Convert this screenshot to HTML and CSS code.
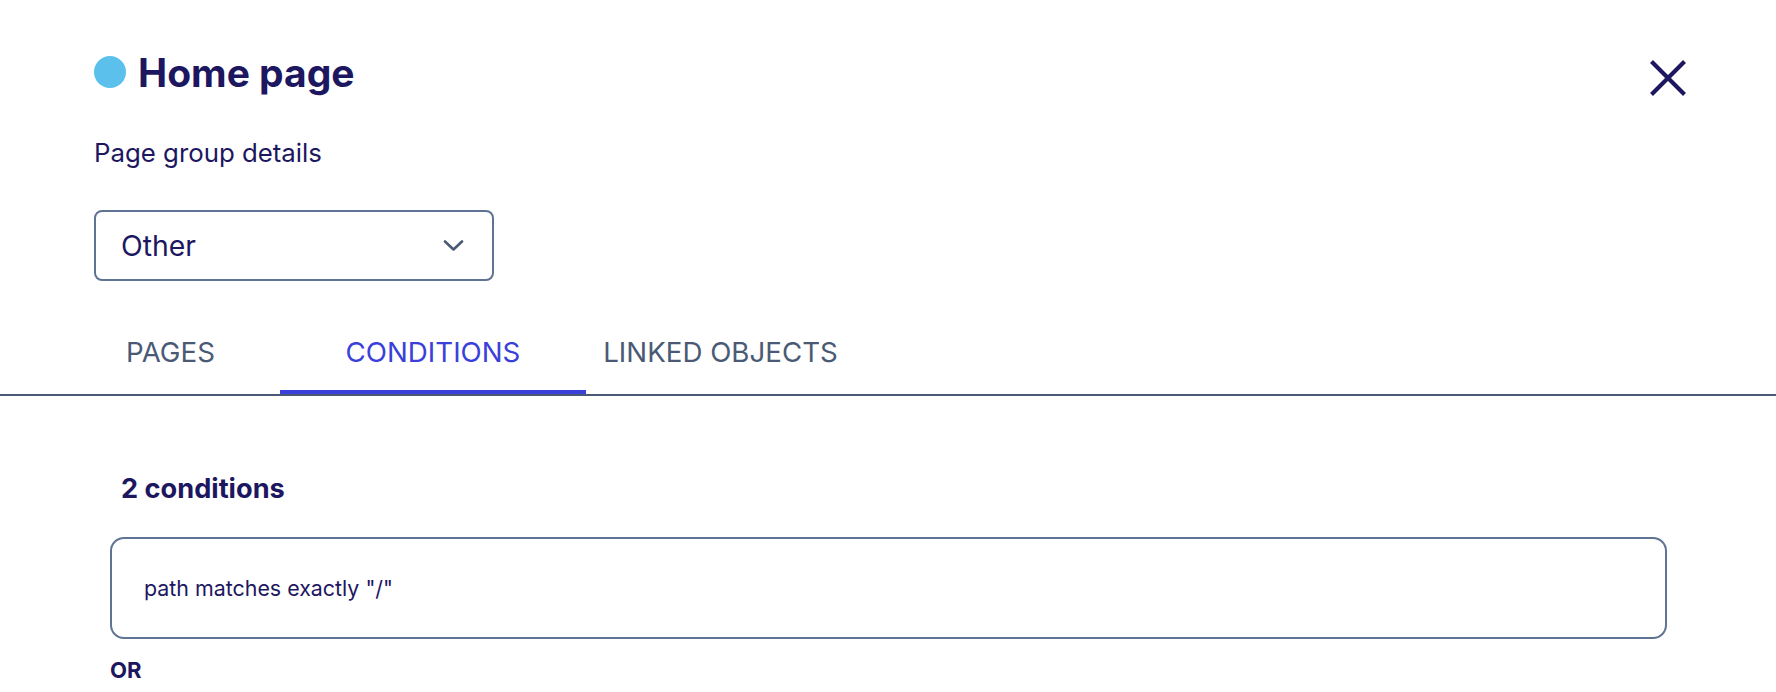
FILE: index.html
```html
<!DOCTYPE html>
<html lang="en">
<head>
<meta charset="utf-8">
<title>Home page</title>
<link rel="stylesheet" href="styles.css">
</head>
<body>
<div class="page">
  <header class="header">
    <div class="title-row">
      <span class="dot"></span>
      <h1 class="title">Home page</h1>
    </div>
    <button class="close" aria-label="Close">
      <svg width="36" height="36" viewBox="0 0 36 36"><path d="M1.5 1.5 L34.5 34.5 M34.5 1.5 L1.5 34.5" stroke="#1d175f" stroke-width="4.2" fill="none"/></svg>
    </button>
  </header>
  <p class="subtitle">Page group details</p>
  <div class="select">
    <span class="select-value">Other</span>
    <svg class="chevron" width="21" height="11" viewBox="0 0 21 11"><path d="M2 1.5 L10.5 9.5 L19 1.5" stroke="#4a5a75" stroke-width="2.6" fill="none" stroke-linecap="round" stroke-linejoin="round"/></svg>
  </div>
  <nav class="tabs">
    <div class="tab tab-pages">PAGES</div>
    <div class="tab tab-conditions active">CONDITIONS</div>
    <div class="tab tab-linked">LINKED OBJECTS</div>
  </nav>
  <section class="conditions">
    <h2 class="count">2 conditions</h2>
    <div class="condition">path matches exactly "/"</div>
    <div class="or">OR</div>
  </section>
</div>
</body>
</html>
```
FILE: styles.css
```css
html, body { margin: 0; padding: 0; background: #fff; }
body { font-family: Inter, Lato, sans-serif; color: #1d175f; }
.page { width: 1776px; }
.header { display: flex; justify-content: space-between; align-items: flex-start; padding: 48px 90px 0 94px; }
.title-row { display: flex; align-items: flex-start; gap: 12px; }
.dot { width: 32px; height: 32px; margin-top: 7.5px; border-radius: 50%; background: #5bc1ec; flex: none; }
.title { margin: 0; font-size: 39px; font-weight: 700; line-height: 50px; }
.close { border: 0; background: none; padding: 0; margin-top: 12px; width: 36px; height: 36px; display: block; }
.close svg { display: block; }
.subtitle { margin: 39px 0 0; padding-left: 94px; font-size: 25.8px; line-height: 32px; }
.select { margin: 41px 0 0 94px; width: 400px; height: 71px; box-sizing: border-box; border: 2px solid #5f7394; border-radius: 8px; display: flex; align-items: center; justify-content: space-between; padding: 0 28px 0 25px; }
.select-value { font-size: 28.4px; line-height: 34px; }
.chevron { display: block; }
.tabs { display: flex; margin-top: 26px; padding-left: 61px; border-bottom: 2px solid #4a5a75; }
.tab { box-sizing: border-box; padding: 28px 0 21px; line-height: 34px; font-size: 27.7px; color: #4a5a75; text-align: center; border-bottom: 4px solid transparent; white-space: nowrap; }
.tab-pages { width: 219px; }
.tab-conditions { width: 306px; }
.tab-linked { width: 269px; }
.tab.active { color: #3a40d9; border-bottom-color: #3a40d9; }
.conditions { padding-left: 110px; }
.count { margin: 76px 0 0 11px; font-size: 27.2px; font-weight: 700; line-height: 34px; }
.condition { margin-top: 31px; width: 1557px; height: 102px; box-sizing: border-box; border: 2px solid #5f7394; border-radius: 14px; display: flex; align-items: center; padding-left: 32px; font-size: 21.4px; }
.or { margin-top: 17px; font-size: 22.1px; font-weight: 700; line-height: 28px; }
```
